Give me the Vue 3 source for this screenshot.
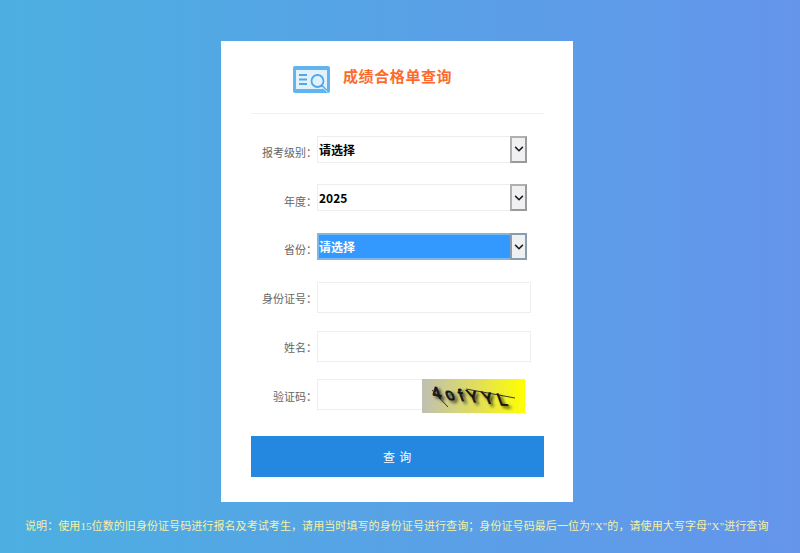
<script setup>
const selects = [
  { label: '报考级别：', options: ['请选择'], focused: false },
  { label: '年度：', options: ['2025'], focused: false },
  { label: '省份：', options: ['请选择'], focused: true }
]
const inputs = [
  { label: '身份证号：' },
  { label: '姓名：' }
]
</script>

<template>
  <main class="page">
    <section class="card">
      <header class="head">
        <svg class="logo" viewBox="0 0 37 27" width="37" height="27" aria-hidden="true">
          <rect x="0" y="0" width="37" height="27" rx="2" fill="#62b4ef" />
          <rect x="3" y="4" width="31" height="19" fill="#e3f1fc" />
          <path d="M6 9h8M6 13.500h8M6 18h8" stroke="#4ea9ec" stroke-width="2" fill="none" />
          <circle cx="24.500" cy="15" r="6" fill="#e3f1fc" stroke="#4ea9ec" stroke-width="1.800" />
          <path d="M28.500 19.500l5 5" stroke="#4ea9ec" stroke-width="2.200" fill="none" />
          <path d="M29 21l5.500 5" stroke="#fff" stroke-width="0.800" fill="none" />
        </svg>
        <h1 class="title">成绩合格单查询</h1>
      </header>

      <form class="form" @submit.prevent>
        <div v-for="s in selects" :key="s.label" class="row">
          <label class="label">{{ s.label }}</label>
          <div class="select-wrap" :class="{ focused: s.focused }">
            <select class="select">
              <option v-for="o in s.options" :key="o">{{ o }}</option>
            </select>
            <span class="arrow">
              <svg viewBox="0 0 11 7" width="10" height="6" aria-hidden="true">
                <path d="M1 1l4.500 4.500L10 1" fill="none" stroke="#1a1a2a" stroke-width="1.800" />
              </svg>
            </span>
          </div>
        </div>

        <div v-for="i in inputs" :key="i.label" class="row">
          <label class="label">{{ i.label }}</label>
          <input class="input" type="text" />
        </div>

        <div class="row">
          <label class="label">验证码：</label>
          <input class="input code" type="text" />
          <svg class="captcha" viewBox="0 0 103 34" width="103" height="34" aria-hidden="true">
            <defs>
              <linearGradient id="capbg" x1="0" x2="1" y1="0" y2="0">
                <stop offset="0" stop-color="#bfc0b4" />
                <stop offset="0.5" stop-color="#dfdc60" />
                <stop offset="1" stop-color="#ffff00" />
              </linearGradient>
              <filter id="capblur" x="-20%" y="-50%" width="140%" height="200%">
                <feGaussianBlur stdDeviation="1.800" />
              </filter>
            </defs>
            <rect width="103" height="34" fill="url(#capbg)" />
            <g filter="url(#capblur)" opacity="0.850">
              <text class="captext" transform="translate(12 19) rotate(6) skewX(26)" x="2" y="2">4ofYYL</text>
            </g>
            <text class="captext" transform="translate(12 19) rotate(6) skewX(26)">4ofYYL</text>
            <path d="M44 10L93 19" stroke="#222" stroke-width="0.900" fill="none" />
            <path d="M10 11L26 28" stroke="#222" stroke-width="0.900" fill="none" />
          </svg>
        </div>

        <button class="submit" type="submit">查 询</button>
      </form>
    </section>

    <p class="note">说明：使用15位数的旧身份证号码进行报名及考试考生，请用当时填写的身份证号进行查询；身份证号码最后一位为"X"的，请使用大写字母"X"进行查询</p>
  </main>
</template>

<style>
html, body { margin: 0; padding: 0; }
</style>

<style scoped>
.page {
  min-height: 553px;
  box-sizing: border-box;
  padding-top: 41px;
  background: linear-gradient(to right, #4cafe1, #6495eb);
  display: flex;
  flex-direction: column;
  align-items: flex-start;
  overflow: hidden;
}
.card {
  width: 352px;
  height: 461px;
  margin-left: 221px;
  box-sizing: border-box;
  background: #fff;
  padding: 25px 29px 0 30px;
}
.head {
  display: flex;
  height: 47px;
  padding-left: 42px;
  border-bottom: 1px solid #f0f0f0;
  align-items: flex-start;
}
.logo { display: block; flex: none; }
.title {
  margin: 0 0 0 13px;
  font: bold 15px/20px "Noto Sans CJK SC", "Liberation Sans", sans-serif;
  letter-spacing: 0.6px;
  color: #fe6a2d;
}
.form {
  display: flex;
  flex-direction: column;
  padding-top: 21.6px;
}
.row {
  display: flex;
  align-items: flex-start;
  height: 48.75px;
}
.label {
  width: 66px;
  flex: none;
  padding-top: 8.4px;
  text-align: right;
  font: 11px/16px "Noto Sans CJK SC", "Liberation Sans", sans-serif;
  color: #666;
  white-space: nowrap;
}
.select-wrap {
  position: relative;
  width: 210px;
  height: 27px;
  box-sizing: border-box;
  border: 1px solid #eeeeee;
  background: #fff;
}
.select {
  display: block;
  width: 100%;
  height: 100%;
  appearance: none;
  border: 0;
  outline: 0;
  margin: 0;
  padding: 0 18px 0 1px;
  background: transparent;
  font: bold 12px "Noto Sans CJK SC", "DejaVu Sans", sans-serif;
  color: #000;
}
.arrow {
  position: absolute;
  top: -1px;
  right: -1px;
  width: 17px;
  height: 27px;
  box-sizing: border-box;
  border: 2px solid #b0b0b0;
  border-right-color: #9a9a9a;
  border-bottom-color: #9a9a9a;
  background: #f0f0f0;
  display: flex;
  align-items: center;
  justify-content: center;
}
.focused { border: 2px solid #7db7ea; }
.focused .select { background: #3399ff; color: #fff; padding-left: 0; }
.focused .arrow { top: -2px; right: -2px; border-color: #8a9cb0; }
.input {
  display: block;
  width: 214px;
  height: 31px;
  box-sizing: border-box;
  border: 1px solid #eeeeee;
  background: #fff;
  outline: 0;
  margin: 0;
  padding: 0 4px;
}
.code { width: 106px; }
.captcha { display: block; flex: none; margin-left: -1px; }
.captext {
  font: 16px "Liberation Sans", sans-serif;
  fill: #141414;
  stroke: #141414;
  stroke-width: 0.8px;
  letter-spacing: 4.5px;
}
.submit {
  display: block;
  width: 293px;
  height: 41px;
  margin: 7.9px 0 0;
  border: 0;
  background: #2488e0;
  color: #fff;
  font: 12px "Noto Sans CJK SC", "Liberation Sans", sans-serif;
  letter-spacing: 0.8px;
}
.note {
  margin: 16px 0 0 25px;
  font: 11px/16px "Liberation Serif", "Noto Sans CJK SC", serif;
  letter-spacing: 0.08px;
  color: #f5f0a6;
  white-space: nowrap;
}
</style>
